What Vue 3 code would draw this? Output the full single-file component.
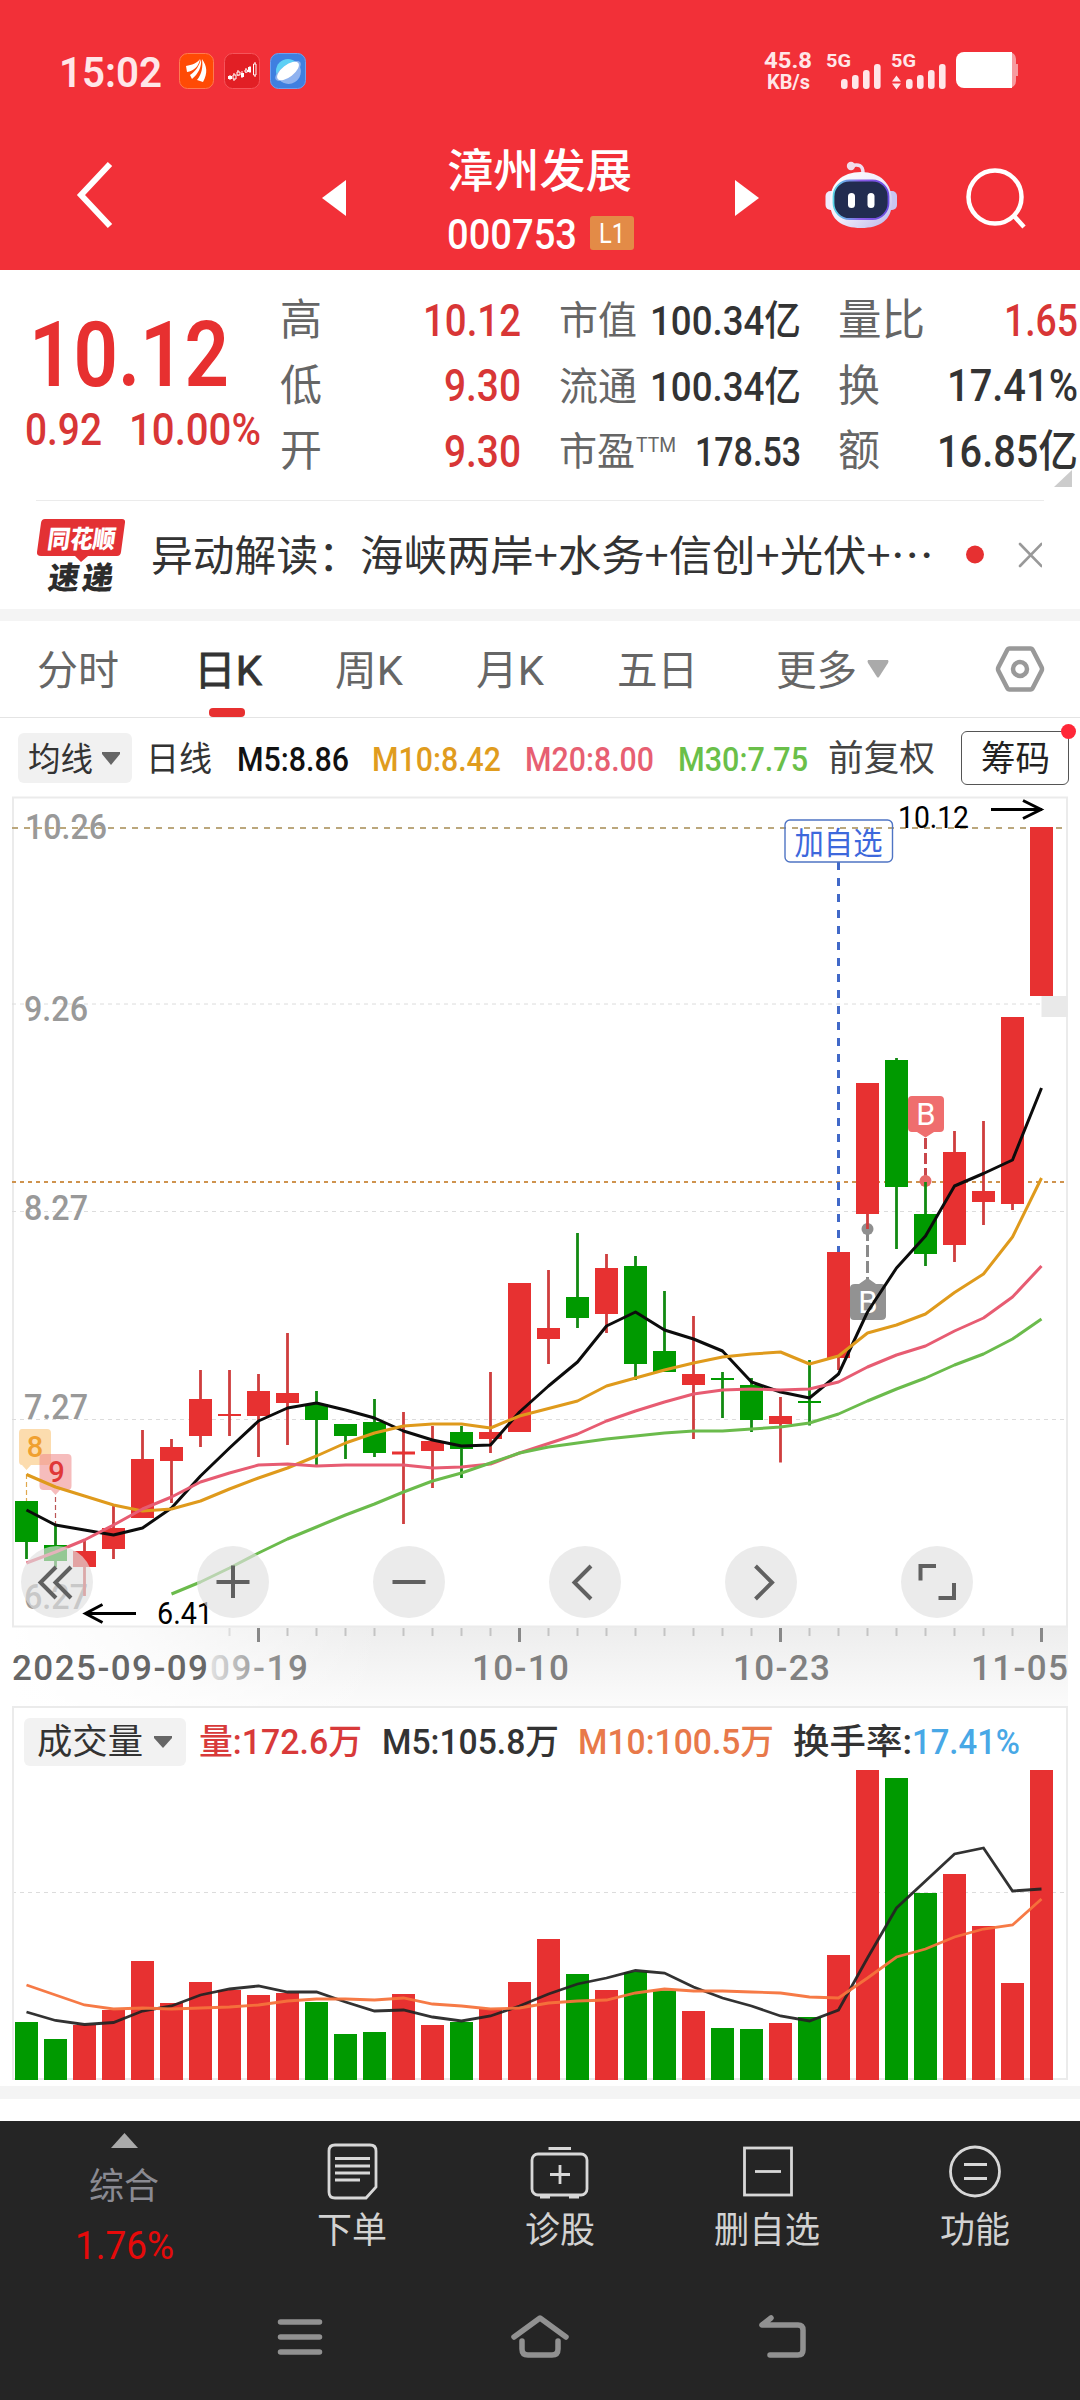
<template>
  <div class="page">
    <header class="top">
      <div class="status">
        <FitText class="clock" text="15:02" :w="103" :size="43" weight="600" />
        <svg class="app-icon" width="35" height="36" viewBox="0 0 35 36">
          <rect x="0.5" y="0.5" width="34" height="35" rx="8" fill="#ff4a05" stroke="#ff7a50" />
          <path d="M7 13C13 12 18 10 21 6C20 13 15 18 8 19ZM22 6C23 14 19 21 13 26L11 22C17 18 20 13 22 6ZM23 6C28 13 29 20 24 29L18 27C23 21 24 14 23 6Z" fill="#fff" />
        </svg>
        <svg class="app-icon" width="36" height="36" viewBox="0 0 36 36">
          <rect x="0.5" y="0.5" width="35" height="35" rx="8" fill="#e21f25" stroke="#f5555b" />
          <path d="M6 22V27M10 20V28M14 17V23M18 18V25M22 15V20M26 13V20M31 9V24" stroke="#ffd9d9" stroke-width="1.2" />
          <path d="M4 23h4v3h-4zM17 20h3v4h-3zM24 14h3v5h-3z" fill="#fff" />
          <path d="M9 22h3v4h-3zM13 19h3v3h-3zM21 17h2.500v2h-2.500zM29.500 11h2.500v11h-2.500z" fill="#e21f25" stroke="#fff" stroke-width="1" />
        </svg>
        <svg class="app-icon" width="36" height="36" viewBox="0 0 36 36">
          <rect x="0.5" y="0.5" width="35" height="35" rx="8" fill="#3f7fe0" stroke="#6f9fee" />
          <circle cx="18" cy="18" r="12" fill="#5fd0f5" />
          <path d="M29 12A12 12 0 0 1 8 25Z" fill="#8fb2ef" />
          <ellipse cx="18" cy="18" rx="15" ry="6" transform="rotate(-35 18 18)" fill="#8fb2ef" />
          <ellipse cx="18" cy="18" rx="13" ry="6" transform="rotate(-38 18 18)" fill="#fff" />
        </svg>
        <div class="speed">
          <FitText text="45.8" :w="48" :size="22" weight="700" />
          <FitText text="KB/s" :w="43" :size="20" weight="700" />
        </div>
        <svg class="signal" width="192" height="40" viewBox="827 52 192 40">
          <g fill="#ffe6e8">
            <text x="827" y="68" textLength="25" lengthAdjust="spacingAndGlyphs" class="net">5G</text>
            <text x="892" y="68" textLength="25" lengthAdjust="spacingAndGlyphs" class="net">5G</text>
            <template v-for="x0 in [842, 907]" :key="x0">
              <rect v-for="(y, i) in [80, 76, 71, 65]" :key="i" :x="x0 + i * 11" :y="y" width="6.6" :height="90 - y" rx="3" />
            </template>
            <path d="M893 82.500L897.500 76.500L902 82.500ZM893 84.500L897.500 90.500L902 84.500Z" />
          </g>
          <path d="M1006 53h4a7 7 0 0 1 7 7v5h2v12h-2v5a7 7 0 0 1-7 7h-4z" fill="#f79a9f" />
          <path d="M965 53H1013V89H965a8 8 0 0 1-8-8V61a8 8 0 0 1 8-8Z" fill="#fff" />
        </svg>
      </div>
      <div class="nav">
        <svg class="back" width="40" height="70" viewBox="0 0 40 70">
          <path d="M35 4L6 35L35 66" fill="none" stroke="#fff" stroke-width="6" />
        </svg>
        <svg class="prev" width="24" height="36" viewBox="0 0 24 36"><path d="M24 0V36L0 18Z" fill="#fff" /></svg>
        <div class="title">
          <FitText text="漳州发展" :w="185" :size="46" weight="500" />
          <div class="code">
            <FitText text="000753" :w="130" :size="42" weight="500" />
            <span class="level"><FitText text="L1" :w="26" :size="28" /></span>
          </div>
        </div>
        <svg class="next" width="24" height="36" viewBox="0 0 24 36"><path d="M0 0V36L24 18Z" fill="#fff" /></svg>
        <svg class="robot" width="74" height="70" viewBox="824 160 74 70">
          <defs>
            <linearGradient id="shell" x1="0" y1="0" x2="1" y2="1">
              <stop offset="0" stop-color="#fff" />
              <stop offset="0.5" stop-color="#f1edfb" />
              <stop offset="1" stop-color="#b9b4ea" />
            </linearGradient>
            <linearGradient id="visor" x1="0" y1="0" x2="1" y2="0">
              <stop offset="0" stop-color="#59d6e8" />
              <stop offset="0.5" stop-color="#8a5be6" />
              <stop offset="1" stop-color="#6a4be0" />
            </linearGradient>
          </defs>
          <path d="M851 166Q863 162 863 173" fill="none" stroke="#f0dff0" stroke-width="3.500" />
          <circle cx="851" cy="166" r="4.200" fill="#f2dcea" />
          <rect x="825.500" y="191" width="12" height="19" rx="5" fill="#efeafd" />
          <rect x="885" y="191" width="12" height="19" rx="5" fill="#c9c6f2" />
          <path d="M861 172C880 172 892 183 892 202C892 220 880 228 861 228C842 228 830 220 830 202C830 183 842 172 861 172Z" fill="url(#shell)" />
          <rect x="833.500" y="180.500" width="55" height="38.500" rx="16" fill="#222c50" stroke="url(#visor)" stroke-width="1.800" />
          <rect x="848" y="193" width="7" height="15" rx="3.500" fill="#fff" />
          <rect x="867.500" y="193" width="7" height="15" rx="3.500" fill="#fff" />
        </svg>
        <svg class="search" width="62" height="64" viewBox="0 0 62 64">
          <circle cx="30" cy="31" r="26.500" fill="none" stroke="#fff" stroke-width="4.500" />
          <path d="M49 50L59 61" stroke="#fff" stroke-width="4.500" />
        </svg>
      </div>
    </header>

    <section class="quote">
      <div class="price">
        <FitText class="last" text="10.12" :w="200" :size="90" weight="600" />
        <div class="change">
          <FitText text="0.92" :w="77" :size="44" weight="500" />
          <FitText text="10.00%" :w="132" :size="44" weight="500" />
        </div>
      </div>
      <div v-for="(col, ci) in quoteCols" :key="ci" class="col" :class="'col' + ci">
        <div v-for="r in col" :key="r.label" class="stat">
          <span class="stat-label">
            <FitText :text="r.label" :w="r.lw" :size="ci === 1 ? 39 : 43" />
            <FitText v-if="r.sup" class="sup" :text="r.sup" :w="40" :size="21" />
          </span>
          <FitText :class="r.up ? 'red' : 'dark'" :text="r.value" :w="r.vw" :size="ci === 1 ? 41 : 44" weight="500" />
        </div>
      </div>
      <svg class="corner" width="18" height="17" viewBox="0 0 18 17"><path d="M18 0V17H0Z" fill="#ccc" /></svg>
    </section>

    <section class="news">
      <svg width="90" height="74" viewBox="36 518 90 74">
        <path d="M45 519H122Q125.500 519 125 522.500L121 552Q120.500 556 117 556H88L81 562L75 556H41Q36.500 556 37 552L41 523Q41.500 519 45 519Z" fill="#e33134" />
        <text transform="translate(46.500 547.500) skewX(-8)" textLength="68" lengthAdjust="spacingAndGlyphs" class="logo-a">同花顺</text>
        <text transform="translate(47 589) skewX(-8)" class="logo-b">速</text>
        <text transform="translate(81 589) skewX(-8)" class="logo-b">递</text>
      </svg>
      <div class="news-text">
        <FitText text="异动解读：" :w="209" :size="42" cjk />
        <FitText text="海峡两岸+水务+信创+光伏+⋯" :w="574" :size="42" cjk />
      </div>
      <svg width="76" height="26" viewBox="0 0 76 26">
        <circle cx="9" cy="12.500" r="9" fill="#e63031" />
        <path d="M55 2L76.500 24M76.500 2L55 24" transform="translate(-1 0)" stroke="#999" stroke-width="2.600" stroke-linecap="round" />
      </svg>
    </section>

    <nav class="tabs">
      <span v-for="t in tabs" :key="t.text" class="tab" :class="{ active: t.active }" :style="{ marginLeft: t.gap + 'px' }">
        <FitText :text="t.text" :w="t.w" :size="41" />
      </span>
      <svg class="more-caret" width="22" height="18" viewBox="0 0 22 18"><path d="M1 0H21Q22 1 21 3L12 17Q11 18 10 17L1 3Q0 1 1 0Z" fill="#aaa" /></svg>
      <svg class="hex" width="50" height="48" viewBox="0 0 50 48">
        <path d="M14.500 3.500H35.500Q37 3.500 38 5.500L46.500 22Q47.500 24 46.500 26L38 42.500Q37 44.500 35.500 44.500H14.500Q13 44.500 12 42.500L3.500 26Q2.500 24 3.500 22L12 5.500Q13 3.500 14.500 3.500Z" fill="none" stroke="#999" stroke-width="4.500" />
        <circle cx="25" cy="24" r="7" fill="none" stroke="#999" stroke-width="4.500" />
      </svg>
    </nav>

    <div class="ma">
      <span class="pill">
        <FitText text="均线" :w="65" :size="33" />
        <svg width="18" height="13" viewBox="0 0 18 13"><path d="M0 0H18V2L9 13L0 2Z" fill="#666" /></svg>
      </span>
      <span v-for="m in maItems" :key="m.text" :style="{ marginLeft: m.gap + 'px', color: m.color }" class="ma-item">
        <FitText :text="m.text" :w="m.w" :size="m.size || 34" :weight="m.weight || '500'" />
      </span>
      <span class="chips"><FitText text="筹码" :w="69" :size="35" /></span>
    </div>

    <div class="kline">
      <svg width="1080" height="910" viewBox="0 796 1080 910">
        <defs>
          <linearGradient id="axisY" x1="0" y1="0" x2="0" y2="1">
            <stop offset="0" stop-color="#ededed" />
            <stop offset="1" stop-color="#fbfbfb" />
          </linearGradient>
          <linearGradient id="axisX" x1="0" y1="0" x2="1" y2="0">
            <stop offset="0" stop-color="#fff" />
            <stop offset="0.1" stop-color="#fff" stop-opacity="0.8" />
            <stop offset="0.35" stop-color="#fff" stop-opacity="0" />
          </linearGradient>
          <linearGradient id="fade" x1="0" y1="0" x2="1" y2="0">
            <stop offset="0" stop-color="#e2e2e2" />
            <stop offset="0.5" stop-color="#999" />
            <stop offset="1" stop-color="#808080" />
          </linearGradient>
        </defs>
        <rect x="12" y="1627" width="1056" height="79" fill="url(#axisY)" />
        <rect x="12" y="1627" width="1056" height="79" fill="url(#axisX)" />
        <rect x="13" y="797.500" width="1054" height="829" fill="none" stroke="#ebebeb" stroke-width="2" />

        <line v-for="y in [1004, 1211.5, 1419.5]" :key="y" x1="12" x2="1066" :y1="y" :y2="y" stroke="#dcdcdc" stroke-width="1" stroke-dasharray="4 4" />
        <text v-for="l in priceLabels" :key="l.t" :x="l.x" :y="l.y" :textLength="l.w" lengthAdjust="spacingAndGlyphs" class="price-label">{{ l.t }}</text>
        <line x1="12" x2="1066" y1="828" y2="828" stroke="#bba77c" stroke-width="2" stroke-dasharray="6 6" />
        <line x1="12" x2="1066" y1="1182" y2="1182" stroke="#cf934e" stroke-width="2" stroke-dasharray="4 4" />

        <rect x="1041.500" y="996" width="26" height="21" fill="#e9e9e9" />
        <line x1="838.500" x2="838.500" y1="862" y2="1252" stroke="#4169c8" stroke-width="3" stroke-dasharray="8 8" />

        <!-- signal flags under the candles -->
        <g>
          <path d="M26.500 1474V1501" stroke="#e0a84e" stroke-width="1.200" stroke-dasharray="5 3" />
          <path d="M22 1429H47Q51 1429 51 1433V1461Q51 1465 47 1465H31L26.500 1470L22 1465Q19 1465 19 1461V1433Q19 1429 22 1429Z" fill="#fcdcae" />
          <text x="35" y="1457" text-anchor="middle" class="flag" fill="#f0a030">8</text>
          <path d="M55.500 1497V1525" stroke="#b55" stroke-width="1.200" stroke-dasharray="5 3" />
          <path d="M43.500 1454H67.500Q71.500 1454 71.500 1458V1486Q71.500 1490 67.500 1490H60L55.500 1495L51 1490H43.500Q39.500 1490 39.500 1486V1458Q39.500 1454 43.500 1454Z" fill="#f09090" fill-opacity="0.6" />
          <text x="56.500" y="1482" text-anchor="middle" class="flag" fill="#e03838">9</text>
        </g>
        <path d="M867.500 1229V1280" stroke="#8a8a8a" stroke-width="3" stroke-dasharray="12 4" />
        <path d="M855 1284H859L867.500 1278L876 1284H881Q886 1284 886 1288V1316Q886 1320 881 1320H854Q850 1320 850 1316V1288Q850 1284 855 1284Z" fill="#929292" />
        <text x="868" y="1313" text-anchor="middle" class="buy">B</text>
        <path d="M925.500 1138V1178" stroke="#c9474b" stroke-width="3" stroke-dasharray="11 4" />
        <path d="M912 1096H940Q944 1096 944 1100V1128Q944 1132 940 1132H934L925.500 1137.500L917 1132H912Q908 1132 908 1128V1100Q908 1096 912 1096Z" fill="#ef6e6e" />
        <text x="926" y="1125" text-anchor="middle" class="buy">B</text>
        <circle cx="925.500" cy="1181" r="6" fill="#e66b69" />
        <circle cx="867.500" cy="1229" r="6" fill="#8f8f8f" />

        <g v-for="(c, i) in candles" :key="i" :fill="c[0] ? '#e73131' : '#009a00'">
          <rect :x="cx(i) - 1.400" :y="c[1]" width="2.800" :height="c[4] - c[1]" :fill="c[0] ? '#cf3e3e' : '#128a12'" />
          <rect :x="cx(i) - 11.500" :y="c[2]" width="23" :height="c[3] - c[2]" />
        </g>
        <polyline v-for="m in maLines" :key="m.color" :points="points(m.ys)" fill="none" :stroke="m.color" stroke-width="3" stroke-linejoin="round" />

        <rect x="785" y="820" width="107.500" height="42" rx="5" fill="none" stroke="#4f74c4" stroke-width="1.400" />
        <text x="794.500" y="854" textLength="88" lengthAdjust="spacingAndGlyphs" class="add">加自选</text>
        <text x="898" y="828" textLength="71" lengthAdjust="spacingAndGlyphs" class="extreme">10.12</text>
        <path d="M991 809.500H1042M1023 800.500L1041 809.500L1023 818.500" fill="none" stroke="#000" stroke-width="3" />
        <text x="157" y="1624" textLength="56" lengthAdjust="spacingAndGlyphs" class="extreme">6.41</text>
        <path d="M136 1613.500H85M102.500 1604.500L85.500 1613.500L102.500 1622.500" fill="none" stroke="#000" stroke-width="3" />

        <!-- floating chart controls -->
        <circle v-for="i in 6" :key="'b' + i" :cx="57 + (i - 1) * 176" cy="1582" r="36" fill="#e1e1e1" fill-opacity="0.66" />
        <g fill="none" stroke="#606060" stroke-width="4">
          <path d="M56 1567L40.500 1582.500L56 1598M71 1567L55.500 1582.500L71 1598" />
          <path d="M216.500 1582H249.500M233 1565.500V1598" />
          <path d="M392.500 1582H425.500" />
          <path d="M591 1566L574.500 1582.500L591 1599" />
          <path d="M755.500 1566L772 1582.500L755.500 1599" />
          <path d="M920.500 1580.500V1566H936M938.500 1598H954V1583" />
        </g>

        <line v-for="i in 29" :key="'t' + i" :x1="cx(i + 6)" :x2="cx(i + 6)" y1="1628" :y2="isMajor(i + 6) ? 1642 : 1636"
              :stroke="isMajor(i + 6) ? '#888' : i === 1 ? '#ddd' : '#c4c4c4'" :stroke-width="isMajor(i + 6) ? 3 : 2" />
        <text x="12" y="1679.500" textLength="196" class="date" fill="#666">2025-09-09</text>
        <text x="210" y="1679.500" textLength="98" class="date" fill="url(#fade)">09-19</text>
        <text x="472" y="1679.500" textLength="97" class="date" fill="#808080">10-10</text>
        <text x="733" y="1679.500" textLength="97" class="date" fill="#808080">10-23</text>
        <text x="971" y="1679.500" textLength="97" class="date" fill="#808080">11-05</text>
      </svg>
    </div>

    <div class="volume">
      <div class="vol-head">
        <span class="pill vol-pill">
          <FitText text="成交量" :w="106" :size="35" />
          <svg width="18" height="12" viewBox="0 0 18 12"><path d="M0 0H18V2L9 12L0 2Z" fill="#666" /></svg>
        </span>
        <span v-for="v in volItems" :key="v.text" class="ma-item" :style="{ marginLeft: v.gap + 'px', color: v.color }">
          <FitText :text="v.text" :w="v.w" :size="35" weight="500" />
        </span>
      </div>
      <svg width="1080" height="310" viewBox="0 1770 1080 310">
        <line x1="12" x2="1066" y1="1892.500" y2="1892.500" stroke="#dcdcdc" stroke-dasharray="4 4" />
        <path d="M13 1770V2079M1067 1770V2079M12 2079H1068" stroke="#ebebeb" stroke-width="2" />
        <rect v-for="(y, i) in volumes" :key="i" :x="cx(i) - 11.500" :y="y" width="23" :height="2080 - y" :fill="candles[i][0] ? '#e73131' : '#009a00'" />
        <polyline :points="points(volMa5)" fill="none" stroke="#222" stroke-opacity="0.93" stroke-width="2.800" />
        <polyline :points="points(volMa10)" fill="none" stroke="#f5733c" stroke-opacity="0.95" stroke-width="2.800" />
      </svg>
    </div>
    <div class="band"></div>

    <footer class="bottom">
      <div class="actions">
        <div class="action index">
          <svg width="27" height="15" viewBox="0 0 27 15"><path d="M13.500 0L27 15H0Z" fill="#aaa" /></svg>
          <FitText class="idx-name" text="综合" :w="70" :size="36" />
          <FitText class="idx-val" text="1.76%" :w="99" :size="38" />
        </div>
        <div class="action order">
          <svg width="52" height="58" viewBox="326 2142 52 58" class="line">
            <path d="M335 2145H370Q376 2145 376 2151V2187L366 2198H335Q329 2198 329 2192V2151Q329 2145 335 2145Z" />
            <path d="M335 2158.500H370M335 2166H370M335 2173H370M335 2180H360" />
          </svg>
          <FitText text="下单" :w="70" :size="36" />
        </div>
        <div class="action diag">
          <svg width="60" height="58" viewBox="530 2142 60 58" class="line">
            <rect x="532" y="2154" width="55" height="41" rx="6" />
            <path d="M548.500 2148.500H571M560 2165V2184M550 2174.500H570M540 2197H550M569 2197H579" />
          </svg>
          <FitText text="诊股" :w="70" :size="36" />
        </div>
        <div class="action del">
          <svg width="52" height="58" viewBox="740 2142 52 58" class="line">
            <rect x="743.500" y="2148" width="47" height="47" />
            <path d="M754 2171.500H780" />
          </svg>
          <FitText text="删自选" :w="106" :size="36" />
        </div>
        <div class="action func">
          <svg width="54" height="58" viewBox="948 2142 54 58" class="line">
            <circle cx="975" cy="2171.500" r="24.500" />
            <path d="M964 2164.500H987M964 2178.500H987" />
          </svg>
          <FitText text="功能" :w="70" :size="36" />
        </div>
      </div>
      <div class="sysnav">
        <svg width="46" height="38" viewBox="0 0 46 38"><path d="M3.500 4H42.500M3.500 19H42.500M3.500 34H42.500" /></svg>
        <svg width="60" height="46" viewBox="510 2311 60 46"><path d="M514 2334L540 2315L566 2334M522 2338V2346Q522 2352 528 2352H552Q558 2352 558 2346V2338" /></svg>
        <svg width="50" height="46" viewBox="755 2311 50 46"><path d="M769 2315L760 2322H796Q801 2322 801 2327V2347Q801 2352 796 2352H768" /></svg>
      </div>
    </footer>
  </div>
</template>

<script setup>
import { h } from 'vue'

// One line of text squeezed or stretched to a fixed width
const FitText = (props) => {
  const size = Number(props.size)
  return h('svg', { width: props.w, height: size, viewBox: `0 0 ${props.w} ${size}`, overflow: 'visible', fill: 'currentColor' }, [
    h('text', {
      x: 0,
      y: size * 0.87,
      textLength: props.w,
      lengthAdjust: 'spacingAndGlyphs',
      'font-size': size,
      'font-weight': props.weight || '400',
      'font-family': props.cjk !== undefined ? "'Noto Sans CJK SC', sans-serif" : "Roboto, 'Noto Sans CJK SC', sans-serif",
    }, props.text),
  ])
}
FitText.props = ['text', 'w', 'size', 'weight', 'cjk']

const quoteCols = [
  [
    { label: '高', lw: 42, value: '10.12', vw: 98, up: true },
    { label: '低', lw: 42, value: '9.30', vw: 77, up: true },
    { label: '开', lw: 42, value: '9.30', vw: 77, up: true },
  ],
  [
    { label: '市值', lw: 78, value: '100.34亿', vw: 151 },
    { label: '流通', lw: 78, value: '100.34亿', vw: 151 },
    { label: '市盈', lw: 76, sup: 'TTM', value: '178.53', vw: 106 },
  ],
  [
    { label: '量比', lw: 87, value: '1.65', vw: 74, up: true },
    { label: '换', lw: 42, value: '17.41%', vw: 131 },
    { label: '额', lw: 42, value: '16.85亿', vw: 141 },
  ],
]

const tabs = [
  { text: '分时', w: 82, gap: 37 },
  { text: '日K', w: 68, gap: 75, active: true },
  { text: '周K', w: 68, gap: 73 },
  { text: '月K', w: 68, gap: 73 },
  { text: '五日', w: 81, gap: 73 },
  { text: '更多', w: 81, gap: 78 },
]

const maItems = [
  { text: '日线', w: 66, gap: 14, color: '#333', weight: '400' },
  { text: 'M5:8.86', w: 112, gap: 25, color: '#111' },
  { text: 'M10:8.42', w: 129, gap: 23, color: '#e09c1e' },
  { text: 'M20:8.00', w: 129, gap: 24, color: '#e75f72' },
  { text: 'M30:7.75', w: 130, gap: 24, color: '#6abf49' },
  { text: '前复权', w: 107, gap: 20, color: '#444', weight: '400', size: 36 },
]

const volItems = [
  { text: '量:172.6万', w: 163, gap: 13, color: '#d83a3a' },
  { text: 'M5:105.8万', w: 177, gap: 20, color: '#333' },
  { text: 'M10:100.5万', w: 196, gap: 19, color: '#e8794a' },
  { text: '换手率:', w: 119, gap: 19, color: '#333' },
  { text: '17.41%', w: 108, gap: 0, color: '#48a8e6' },
]

const priceLabels = [
  { t: '10.26', x: 25, y: 839, w: 82 },
  { t: '9.26', x: 24, y: 1021, w: 64 },
  { t: '8.27', x: 24, y: 1220, w: 64 },
  { t: '7.27', x: 24, y: 1419, w: 64 },
  { t: '6.27', x: 24, y: 1609, w: 64 },
]

// [up, high, bodyTop, bodyBottom, low]
const candles = [
  [0, 1501, 1501, 1542, 1559], [0, 1525, 1545, 1561, 1567], [1, 1540, 1551, 1567, 1596], [1, 1505, 1528, 1549, 1559],
  [1, 1430, 1459, 1518, 1518], [1, 1439, 1447, 1461, 1503], [1, 1370, 1399, 1436, 1447], [1, 1370, 1414, 1416, 1436],
  [1, 1374, 1391, 1416, 1457], [1, 1333, 1393, 1403, 1445], [0, 1391, 1404, 1420, 1465], [0, 1424, 1424, 1436, 1459],
  [0, 1399, 1422, 1453, 1457], [1, 1412, 1451.5, 1454.5, 1524], [1, 1426, 1441, 1451, 1488], [0, 1426, 1432, 1449, 1478],
  [1, 1372, 1432, 1439, 1453], [1, 1283, 1283, 1432, 1432], [1, 1270, 1328, 1339, 1364], [0, 1233, 1297, 1318, 1328],
  [1, 1254, 1268, 1314, 1333], [0, 1256, 1266, 1364, 1380], [0, 1291, 1351, 1372, 1372], [1, 1316, 1374, 1385, 1439],
  [0, 1372, 1378, 1380, 1418], [0, 1378, 1385, 1420, 1432], [1, 1397, 1416, 1424, 1462.5], [0, 1360, 1401, 1403, 1425.5],
  [1, 1252, 1252, 1358, 1370], [1, 1083, 1083, 1214, 1229], [0, 1058, 1060, 1187, 1249], [0, 1182, 1214, 1254, 1266],
  [1, 1131, 1152, 1245, 1262], [1, 1121, 1191, 1202, 1225], [1, 1017, 1017, 1204, 1210], [1, 827, 827, 996, 996],
]

const maLines = [
  { color: '#0c0c0c', ys: [1510, 1525, 1530, 1535, 1528, 1508, 1476, 1448, 1421, 1408, 1403, 1410, 1418, 1431, 1440, 1446, 1445, 1412, 1386, 1362, 1326, 1312, 1330, 1339, 1351, 1382, 1392, 1398, 1374, 1312, 1268, 1236, 1186, 1173.5, 1160, 1088] },
  { color: '#df9a1c', ys: [1474.5, 1487, 1496, 1505, 1511, 1509, 1501, 1489, 1478, 1468, 1456, 1443, 1433, 1426, 1424, 1424, 1428, 1416, 1408.5, 1401, 1386, 1378, 1370, 1363, 1357, 1354, 1352, 1364, 1356, 1333, 1325, 1314, 1292.5, 1274, 1237, 1178] },
  { color: '#e75c72', ys: [1563, 1552, 1540, 1525, 1509, 1497, 1482, 1473, 1465, 1464, 1466, 1465, 1465, 1465, 1468, 1467, 1464, 1453, 1443.5, 1434, 1421, 1411, 1402, 1394, 1390, 1389, 1390, 1389, 1382, 1367, 1355, 1346, 1331, 1318, 1297, 1266] },
  { color: '#6bbb4c', ys: [null, null, null, null, null, 1594, 1582, 1568, 1553, 1539, 1527, 1515, 1504, 1492, 1481, 1473, 1463, 1453, 1447, 1443, 1439, 1436, 1433, 1431, 1431, 1429, 1427, 1423, 1414, 1401, 1389, 1378, 1365, 1354, 1339, 1319] },
]

const volumes = [2022, 2039, 2025, 2010, 1961, 2003, 1982, 1990, 1995, 1993, 2002, 2034, 2032, 1994, 2025, 2022, 2009, 1982,
  1939, 1974, 1990, 1972, 1990.5, 2011, 2028, 2029, 2023, 2017, 1955, 1770, 1778, 1893, 1874, 1926, 1983, 1770]
const volMa5 = [2012, 2020.5, 2024.5, 2022.5, 2011, 2006, 1995, 1989, 1986, 1992, 1992, 2002, 2011, 2010, 2017, 2021, 2016, 2006,
  1994, 1984, 1978, 1970.5, 1973, 1987, 1998, 2006, 2016, 2021, 2010, 1958, 1908, 1881, 1854, 1848, 1891, 1889]
const volMa10 = [1985, 1995, 2005, 2009, 2008, 2009, 2008, 2007, 2005, 2001, 1999, 1999, 2000, 1998, 2004, 2006, 2009, 2008,
  2003, 2001, 2000, 1993, 1989, 1991, 1991, 1992, 1993, 1997, 1998, 1978, 1957, 1949, 1937, 1929, 1925, 1899]

function cx(i) { return 26.5 + i * 29 }
function isMajor(i) { return i % 9 === 8 }
function points(ys) {
  return ys.map((y, i) => (y === null ? '' : `${cx(i)},${y}`)).filter(Boolean).join(' ')
}
</script>

<style>
body { background: #fff; }
</style>

<style scoped>
.page {
  width: 1080px;
  height: 2400px;
  overflow: hidden;
  display: flex;
  flex-direction: column;
  font-family: Roboto, 'Noto Sans CJK SC', sans-serif;
  background: #fff;
  color: #333;
}
.page svg { display: block; flex: none; }
.red { color: #d83636; }
.dark { color: #333; }

.top { height: 270px; background: #f23038; color: #fff; }
.status { height: 124px; padding-top: 18px; box-sizing: border-box; display: flex; align-items: center; color: #ffe6e8; }
.clock { margin-left: 59px; margin-right: 7px; }
.app-icon { margin-left: 10px; }
.speed { width: 48px; margin-left: 458px; display: flex; flex-direction: column; align-items: center; gap: 1px; margin-top: -2px; }
.signal { margin-left: 14px; }
.net { font-size: 18px; font-weight: 700; }

.nav { height: 146px; display: flex; align-items: flex-start; }
.back { margin: 36px 0 0 75px; }
.prev { margin: 56px 0 0 207px; }
.title { width: 190px; margin: 23px 0 0 101px; }
.code { display: flex; align-items: center; margin-top: 19px; }
.level { margin-left: 13px; width: 44px; height: 34px; flex: none; border-radius: 3px; background: #e38b47; display: flex; align-items: center; justify-content: center; color: #fff; }
.next { margin: 56px 0 0 98px; }
.robot { margin: 36px 0 0 65px; }
.search { margin: 42px 0 0 67px; }

.quote { height: 231px; display: flex; position: relative; box-sizing: border-box; padding-top: 17px; }
.quote::after { content: ''; position: absolute; left: 36px; right: 36px; bottom: 0; height: 1px; background: #ebebeb; }
.price { width: 280px; }
.last { margin: 21px 0 0 29px; color: #e73030; }
.change { display: flex; gap: 27px; margin: 9px 0 0 25px; color: #d83636; }
.col { display: flex; flex-direction: column; }
.stat { height: 65.5px; display: flex; align-items: center; justify-content: space-between; }
.stat-label { display: flex; color: #666; }
.sup { margin-left: 1px; margin-top: 3px; }
.col0 { width: 241px; }
.col1 { width: 242px; margin-left: 38px; }
.col2 { width: 240px; margin-left: 37px; }
.corner { position: absolute; left: 1054px; top: 200px; }

.news { height: 108px; display: flex; align-items: center; padding-left: 36px; }
.news-text { display: flex; margin-left: 25px; margin-right: 32px; color: #333; }
.logo-a { font-size: 25px; font-weight: 900; fill: #fff; font-family: 'Noto Sans CJK SC', sans-serif; }
.logo-b { font-size: 31px; font-weight: 900; fill: #2c2c2c; font-family: 'Noto Sans CJK SC', sans-serif; }

.tabs { height: 109px; box-sizing: border-box; border-top: 12px solid #f4f4f4; border-bottom: 1px solid #e4e4e4; display: flex; align-items: center; }
.tab { color: #666; position: relative; }
.tab.active { color: #333; stroke: #333; stroke-width: 0.8px; }
.tab.active::after { content: ''; position: absolute; left: 15px; bottom: -27px; width: 36px; height: 9px; border-radius: 4px; background: #e73030; }
.more-caret { margin-left: 10px; }
.hex { margin-left: 106px; }

.ma { height: 80px; margin-bottom: -2px; display: flex; align-items: center; }
.pill { margin-left: 18px; width: 114px; height: 50px; box-sizing: border-box; padding-left: 10px; display: flex; align-items: center; gap: 9px; border-radius: 6px; background: #f1f1f1; color: #333; }
.ma-item { display: block; }
.chips { margin-left: 26px; width: 108px; height: 54px; flex: none; box-sizing: border-box; border: 1.5px solid #555; border-radius: 6px; display: flex; align-items: center; justify-content: center; position: relative; color: #222; }
.chips::after { content: ''; position: absolute; right: -8px; top: -8px; width: 15px; height: 15px; border-radius: 50%; background: #ff2738; }

.kline { height: 910px; }
.price-label { font-size: 35px; font-weight: 500; fill: #999; }
.date { font-size: 35px; font-weight: 500; }
.flag { font-size: 29px; font-weight: 500; }
.buy { font-size: 31px; fill: #fff; }
.add { font-size: 31px; fill: #3d68dc; }
.extreme { font-size: 31px; fill: #000; }

.volume { height: 380px; }
.vol-head { height: 64px; margin: 0 12px; box-sizing: border-box; padding-top: 5px; border: 2px solid #ebebeb; border-bottom: 0; display: flex; align-items: center; }
.vol-pill { margin-left: 10px; width: 162px; height: 48px; padding-left: 13px; gap: 11px; background: #f2f2f2; }
.band { height: 13px; background: #f4f4f4; margin-bottom: 22px; }

.bottom { flex: 1; background: #252525; color: #d2d2d2; }
.actions { height: 169px; display: flex; }
.action { display: flex; flex-direction: column; align-items: center; padding-top: 21px; gap: 12px; box-sizing: border-box; }
.index { width: 248px; padding-top: 12px; gap: 0; }
.idx-name { margin-top: 20px; color: #8a8a92; }
.idx-val { margin-top: 22px; color: #e60a0a; }
.order { width: 208px; }
.diag { width: 207px; }
.del { width: 208px; }
.func { width: 208px; }
.line { fill: none; stroke: #d8d8d8; stroke-width: 2.8; }
.sysnav { display: flex; justify-content: center; gap: 187px; padding: 24px 0 0 4px; align-items: center; }
.sysnav svg { fill: none; stroke: #919191; stroke-width: 5.5; stroke-linecap: round; stroke-linejoin: round; }
</style>
